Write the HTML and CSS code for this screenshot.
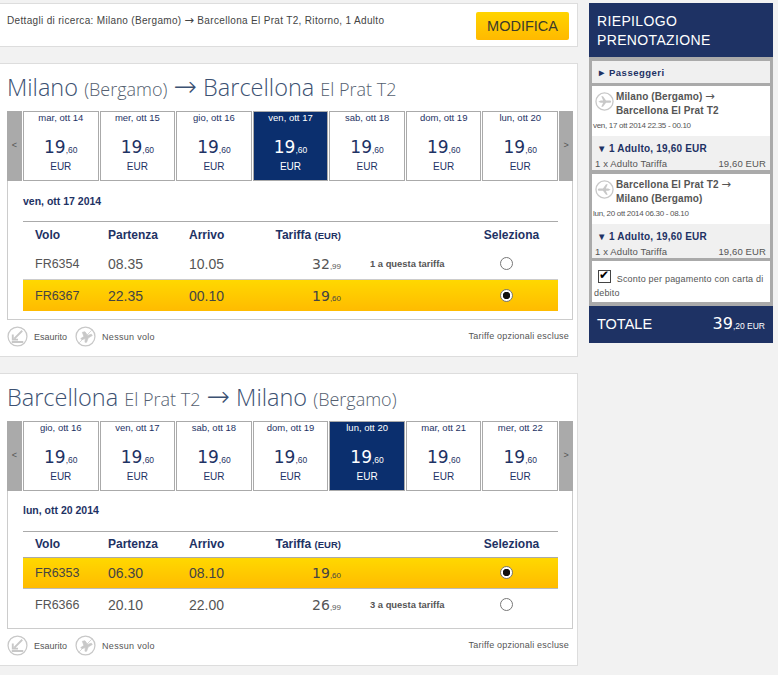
FILE: index.html
```html
<!DOCTYPE html>
<html lang="it">
<head>
    <meta charset="UTF-8">
    <title>Riepilogo prenotazione</title>
    <link rel="stylesheet" href="styles.css">
</head>
<body>
<svg class="sprites" width="0" height="0">
    <symbol id="ico-plane" viewBox="0 0 20 20">
        <circle cx="10" cy="10" r="9" fill="#fff" stroke="#c8c8c8" stroke-width="1.4"/>
        <path d="M3.5 10.2 L6 9 L8.6 9 L6.6 4.6 L8.4 4.6 L11.6 9 L15 9 C16.4 9 17 9.6 17 10.2 C17 10.8 16.4 11.3 15 11.3 L11.6 11.3 L8.4 15.6 L6.6 15.6 L8.6 11.3 L6 11.3 Z" fill="#c8c8c8"/>
    </symbol>
    <symbol id="ico-soldout" viewBox="0 0 20 20">
        <circle cx="10" cy="10" r="9" fill="#fff" stroke="#c8c8c8" stroke-width="1.2"/>
        <path d="M14.5 4.5 L7 12 M5.5 8 L5.5 13 L10.5 13 M4.5 15.2 L15.5 15.2" fill="none" stroke="#c8c8c8" stroke-width="1.8"/>
    </symbol>
    <symbol id="ico-noflight" viewBox="0 0 20 20">
        <circle cx="10" cy="10" r="9" fill="#fff" stroke="#c8c8c8" stroke-width="1.2"/>
        <path d="M4 16 L16 4 M7 6 L9.5 5.5 L12 9 L15.5 7.8 L16.5 9 L12.5 11.5 L11 15.5 L9.5 15.5 L9.8 12 L6.5 13 L5.5 12 L8.5 10 Z" fill="#c8c8c8" stroke="#c8c8c8" stroke-width=".7"/>
    </symbol>
</svg>

<div class="page">
    <div class="main-col">
        <div class="search-bar">
            <span class="search-text">Dettagli di ricerca: Milano (Bergamo) <span class="arr">→</span> Barcellona El Prat T2, Ritorno, 1 Adulto</span>
            <a class="btn-edit">MODIFICA</a>
        </div>

        <section class="card">
            <h2 class="route">Milano <small>(Bergamo)</small> <span class="arrow">→</span> Barcellona <small>El Prat T2</small></h2>
            <div class="flight-box">
                <div class="days">
                    <div class="day-nav">&lt;</div>
                    <div class="day"><span class="d-name">mar, ott 14</span><span class="d-price">19<i>,60</i></span><span class="d-cur">EUR</span></div>
                    <div class="day"><span class="d-name">mer, ott 15</span><span class="d-price">19<i>,60</i></span><span class="d-cur">EUR</span></div>
                    <div class="day"><span class="d-name">gio, ott 16</span><span class="d-price">19<i>,60</i></span><span class="d-cur">EUR</span></div>
                    <div class="day active"><span class="d-name">ven, ott 17</span><span class="d-price">19<i>,60</i></span><span class="d-cur">EUR</span></div>
                    <div class="day"><span class="d-name">sab, ott 18</span><span class="d-price">19<i>,60</i></span><span class="d-cur">EUR</span></div>
                    <div class="day"><span class="d-name">dom, ott 19</span><span class="d-price">19<i>,60</i></span><span class="d-cur">EUR</span></div>
                    <div class="day"><span class="d-name">lun, ott 20</span><span class="d-price">19<i>,60</i></span><span class="d-cur">EUR</span></div>
                    <div class="day-nav">&gt;</div>
                </div>
                <div class="sel-date">ven, ott 17 2014</div>
                <div class="flights">
                    <div class="row head">
                        <span>Volo</span><span>Partenza</span><span>Arrivo</span><span class="c-fare">Tariffa <em>(EUR)</em></span><span></span><span class="c-sel">Seleziona</span>
                    </div>
                    <div class="row">
                        <span class="c-no">FR6354</span><span class="c-time">08.35</span><span class="c-time">10.05</span><span class="c-fare price">32<i>,99</i></span><span class="c-note">1 a questa tariffa</span><span class="c-sel"><input type="radio" name="out"></span>
                    </div>
                    <div class="row picked">
                        <span class="c-no">FR6367</span><span class="c-time">22.35</span><span class="c-time">00.10</span><span class="c-fare price">19<i>,60</i></span><span class="c-note"></span><span class="c-sel"><input type="radio" name="out" checked></span>
                    </div>
                </div>
            </div>
            <div class="legend">
                <svg class="lg-ico"><use href="#ico-soldout"/></svg><span>Esaurito</span>
                <svg class="lg-ico"><use href="#ico-noflight"/></svg><span class="lg-wide">Nessun volo</span>
                <span class="lg-right">Tariffe opzionali escluse</span>
            </div>
        </section>

        <section class="card">
            <h2 class="route">Barcellona <small>El Prat T2</small> <span class="arrow">→</span> Milano <small>(Bergamo)</small></h2>
            <div class="flight-box">
                <div class="days">
                    <div class="day-nav">&lt;</div>
                    <div class="day"><span class="d-name">gio, ott 16</span><span class="d-price">19<i>,60</i></span><span class="d-cur">EUR</span></div>
                    <div class="day"><span class="d-name">ven, ott 17</span><span class="d-price">19<i>,60</i></span><span class="d-cur">EUR</span></div>
                    <div class="day"><span class="d-name">sab, ott 18</span><span class="d-price">19<i>,60</i></span><span class="d-cur">EUR</span></div>
                    <div class="day"><span class="d-name">dom, ott 19</span><span class="d-price">19<i>,60</i></span><span class="d-cur">EUR</span></div>
                    <div class="day active"><span class="d-name">lun, ott 20</span><span class="d-price">19<i>,60</i></span><span class="d-cur">EUR</span></div>
                    <div class="day"><span class="d-name">mar, ott 21</span><span class="d-price">19<i>,60</i></span><span class="d-cur">EUR</span></div>
                    <div class="day"><span class="d-name">mer, ott 22</span><span class="d-price">19<i>,60</i></span><span class="d-cur">EUR</span></div>
                    <div class="day-nav">&gt;</div>
                </div>
                <div class="sel-date">lun, ott 20 2014</div>
                <div class="flights">
                    <div class="row head">
                        <span>Volo</span><span>Partenza</span><span>Arrivo</span><span class="c-fare">Tariffa <em>(EUR)</em></span><span></span><span class="c-sel">Seleziona</span>
                    </div>
                    <div class="row picked">
                        <span class="c-no">FR6353</span><span class="c-time">06.30</span><span class="c-time">08.10</span><span class="c-fare price">19<i>,60</i></span><span class="c-note"></span><span class="c-sel"><input type="radio" name="back" checked></span>
                    </div>
                    <div class="row">
                        <span class="c-no">FR6366</span><span class="c-time">20.10</span><span class="c-time">22.00</span><span class="c-fare price">26<i>,99</i></span><span class="c-note">3 a questa tariffa</span><span class="c-sel"><input type="radio" name="back"></span>
                    </div>
                </div>
            </div>
            <div class="legend">
                <svg class="lg-ico"><use href="#ico-soldout"/></svg><span>Esaurito</span>
                <svg class="lg-ico"><use href="#ico-noflight"/></svg><span class="lg-wide">Nessun volo</span>
                <span class="lg-right">Tariffe opzionali escluse</span>
            </div>
        </section>
    </div>

    <aside class="summary">
        <h3 class="sum-title">RIEPILOGO PRENOTAZIONE</h3>
        <div class="sum-body">
            <div class="pax"><span class="tri">►</span>Passeggeri</div>
            <div class="leg">
                <div class="leg-top">
                    <svg class="leg-ico"><use href="#ico-plane"/></svg>
                    <div class="leg-route">Milano (Bergamo) <span class="arr">→</span><br>Barcellona El Prat T2</div>
                </div>
                <div class="leg-time">ven, 17 ott 2014 22.35 - 00.10</div>
                <div class="leg-fare">
                    <div class="fare-total"><span class="tri">▼</span>1 Adulto, 19,60 EUR</div>
                    <div class="fare-line"><span>1 x Adulto Tariffa</span><span>19,60 EUR</span></div>
                </div>
            </div>
            <div class="leg">
                <div class="leg-top">
                    <svg class="leg-ico flip"><use href="#ico-plane"/></svg>
                    <div class="leg-route">Barcellona El Prat T2 <span class="arr">→</span><br>Milano (Bergamo)</div>
                </div>
                <div class="leg-time">lun, 20 ott 2014 06.30 - 08.10</div>
                <div class="leg-fare">
                    <div class="fare-total"><span class="tri">▼</span>1 Adulto, 19,60 EUR</div>
                    <div class="fare-line"><span>1 x Adulto Tariffa</span><span>19,60 EUR</span></div>
                </div>
            </div>
            <div class="discount"><input type="checkbox" checked> Sconto per pagamento con carta di debito</div>
        </div>
        <div class="sum-total">
            <span class="tot-label">TOTALE</span>
            <span class="tot-price">39<i>,20 EUR</i></span>
        </div>
    </aside>
</div>
</body>
</html>
```

FILE: styles.css
```css
body {
    margin: 0;
    background-color: #f2f2f2;
    font-family: "Liberation Sans", Arial, sans-serif;
    color: #444;
}

.sprites {
    position: absolute;
}

.page {
    display: flex;
    align-items: flex-start;
    padding-top: 3px;
}

.main-col {
    width: 578px;
    display: flex;
    flex-direction: column;
    gap: 16px;
}

.arr {
    font-family: "DejaVu Sans", sans-serif;
    font-weight: normal;
    font-size: 11.5px;
    line-height: 1;
    letter-spacing: 0;
}

/* search bar */
.search-bar {
    height: 42px;
    display: flex;
    align-items: flex-start;
    justify-content: space-between;
    background-color: #fff;
    border: 1px solid #ddd;
    border-left: 0;
    padding: 0 8px 0 7px;
}

.search-text {
    font-size: 10px;
    line-height: 11px;
    margin-top: 11px;
    letter-spacing: .33px;
    color: #444;
}

.btn-edit {
    margin-top: 8px;
    width: 93px;
    height: 28px;
    line-height: 29px;
    text-align: center;
    font-size: 14.5px;
    color: #3b3a2c;
    border-radius: 2px;
    background: linear-gradient(to bottom, #ffd400, #ffb900);
}

/* flight card */
.card {
    height: 292px;
    background-color: #fff;
    border: 1px solid #ddd;
    border-left: 0;
    padding: 0 4px 0 7px;
    display: flex;
    flex-direction: column;
}

.card + .card {
    height: 291px;
}

.route {
    margin: 0;
    height: 47px;
    line-height: 46px;
    font-family: "Open Sans", sans-serif;
    font-weight: 300;
    font-size: 23.5px;
    color: #3c5172;
    white-space: nowrap;
}

.route small {
    font-size: 18px;
    color: #555f70;
}

.route .arrow {
    font-family: "DejaVu Sans", sans-serif;
    font-size: 28px;
    line-height: 1;
}

.flight-box {
    border: 1px solid #ccc;
    border-top: 0;
    height: 208px;
}

.card + .card .flight-box {
    height: 207px;
}

.days {
    display: flex;
    height: 70px;
    margin: 0 -1px;
    gap: 1px;
}

.day-nav {
    width: 14px;
    flex: none;
    background-color: #aaa;
    color: #555;
    font-size: 9px;
    text-align: center;
    line-height: 68px;
}

.day-nav:first-child {
    width: 15px;
}

.day {
    flex: 1;
    display: flex;
    flex-direction: column;
    align-items: center;
    border: 1px solid #aaa;
    background-color: #fff;
    color: #1e3264;
}

.day.active {
    background-color: #0b2f6e;
    color: #fff;
}

.d-name {
    font-size: 9.5px;
    line-height: 11px;
}

.d-price {
    font-family: "DejaVu Sans", sans-serif;
    font-size: 17px;
    line-height: 18px;
    margin-top: 15px;
}

.d-price i {
    font-family: "Liberation Sans", sans-serif;
    font-style: normal;
    font-size: 8.5px;
}

.d-cur {
    font-size: 10px;
    line-height: 12px;
    margin-top: 2px;
}

.sel-date {
    margin: 15px 0 0 15px;
    font-size: 10.5px;
    line-height: 11px;
    font-weight: bold;
    color: #1e3264;
}

.card + .card .sel-date {
    margin-top: 14px;
}

.flights {
    margin: 14px 14px 0 15px;
    border-top: 1px solid #aaa;
}

.card + .card .flights {
    margin-top: 15px;
}

.row {
    display: grid;
    grid-template-columns: 73px 81px 64px 88px 124px 1fr;
    box-sizing: border-box;
    height: 31px;
    align-items: center;
    padding-left: 12px;
    font-size: 14px;
    color: #555;
}

.row.head {
    height: 26px;
    font-size: 12px;
    font-weight: bold;
    color: #1e3264;
    padding-bottom: 1px;
}

.card + .card .row.head {
    height: 25px;
}

.row.head em {
    font-style: normal;
    font-size: 9.5px;
}

.row.picked {
    height: 32px;
    color: #444;
    border-top: 1px solid #ccc;
    background: linear-gradient(to bottom, #ffd800, #ffbb00);
}

.row.picked:not(:last-child) {
    border-top-color: #aaa;
    border-bottom: 1px solid #bbb;
}

.row .c-no {
    font-size: 12.5px;
}

.c-fare {
    text-align: right;
}

.row .price {
    font-family: "DejaVu Sans", sans-serif;
    font-size: 14px;
}

.price i {
    font-family: "Liberation Sans", sans-serif;
    font-style: normal;
    font-size: 8px;
}

.c-note {
    padding-left: 29px;
    font-size: 9.4px;
    font-weight: bold;
}

.c-sel {
    text-align: center;
}

.c-sel input {
    appearance: none;
    box-sizing: border-box;
    display: inline-block;
    vertical-align: middle;
    margin: 0 11px 2px 0;
    width: 13px;
    height: 13px;
    border: 1px solid #777;
    border-radius: 50%;
    background: #fff;
}

.c-sel input:checked {
    background: radial-gradient(circle, #111 0, #111 3.4px, #fff 4px);
}

/* legend under the box */
.legend {
    display: flex;
    align-items: center;
    margin-top: 6px;
    font-size: 9px;
    color: #555;
}

.lg-ico {
    width: 21px;
    height: 21px;
    margin-right: 6px;
}

.lg-wide {
    letter-spacing: .3px;
}

.legend > span:nth-of-type(1) {
    margin-right: 8px;
}

.lg-right {
    margin-left: auto;
    margin-right: 4px;
    margin-top: -1px;
    letter-spacing: .2px;
}

/* right column */
.summary {
    width: 184px;
    margin-left: 11px;
}

.sum-title {
    margin: 0;
    background-color: #1e3264;
    color: #fff;
    font-weight: normal;
    font-size: 14px;
    line-height: 19px;
    padding: 9px 60px 7px 8px;
    height: 38px;
    letter-spacing: .35px;
}

.sum-body {
    background-color: #aaa;
    padding: 4px 3px;
    display: flex;
    flex-direction: column;
    gap: 3px;
}

.tri {
    display: inline-block;
    width: 12px;
    font-size: 9.5px;
}

.pax {
    height: 22px;
    line-height: 24px;
    padding-left: 5px;
    background-color: #f0f0f0;
    font-size: 9.5px;
    font-weight: bold;
    letter-spacing: .5px;
    color: #1e3264;
}

.leg {
    background-color: #fff;
}

.leg + .leg {
    margin-top: 1px;
}

.leg-top {
    display: flex;
    padding: 4px 0 0 3px;
}

.leg-ico {
    width: 19px;
    height: 19px;
    margin: 2px 2px 0 0;
    flex: none;
}

.leg-ico.flip {
    transform: scaleX(-1);
}

.leg-route {
    font-size: 10px;
    font-weight: bold;
    line-height: 14px;
    letter-spacing: .12px;
    color: #555;
}

.leg-time {
    height: 15px;
    font-size: 8px;
    line-height: 15px;
    padding-left: 1px;
    letter-spacing: -.3px;
    color: #555;
}

.leg-fare {
    margin-top: 3px;
    background-color: #f0f0f0;
    height: 34px;
    padding: 0 4px 0 3px;
    box-sizing: border-box;
}

.fare-total {
    font-size: 10px;
    font-weight: bold;
    line-height: 19px;
    padding: 3px 0 0 2px;
    letter-spacing: .2px;
    color: #1e3264;
}

.fare-line {
    display: flex;
    justify-content: space-between;
    font-size: 9.5px;
    line-height: 11px;
    letter-spacing: .12px;
    color: #555;
}

.discount {
    height: 41px;
    box-sizing: border-box;
    background-color: #fff;
    font-size: 9px;
    line-height: 14px;
    padding: 9px 2px 0;
    letter-spacing: .2px;
    color: #555;
}

.discount input {
    appearance: none;
    box-sizing: border-box;
    position: relative;
    margin: 0 3px 0 4px;
    width: 13px;
    height: 13px;
    border: 1px solid #444;
    background: #fff;
    vertical-align: -1px;
}

.discount input:checked::after {
    content: "✔";
    position: absolute;
    top: -2px;
    left: 0;
    font-size: 12px;
    line-height: 13px;
    color: #000;
}

.sum-total {
    display: flex;
    justify-content: space-between;
    align-items: baseline;
    height: 37px;
    box-sizing: border-box;
    padding: 8px 8px 0 8px;
    background-color: #1e3264;
    color: #fff;
}

.tot-label {
    font-size: 14.5px;
}

.tot-price {
    font-family: "DejaVu Sans", sans-serif;
    font-size: 16px;
}

.tot-price i {
    font-family: "Liberation Sans", sans-serif;
    font-style: normal;
    font-size: 8.5px;
}
```
